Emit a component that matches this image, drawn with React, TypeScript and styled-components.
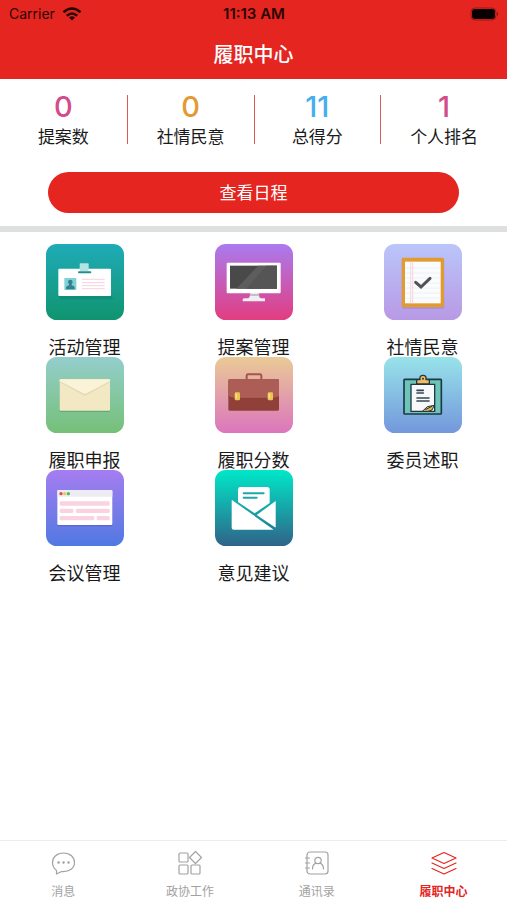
import React from "react";
import styled, { createGlobalStyle } from "styled-components";

const RED = "#e5251f";

const GlobalStyle = createGlobalStyle`
  *, *::before, *::after { box-sizing: border-box; }
  body {
    margin: 0;
    background: #fff;
    color: #1a1a1a;
    font-family: Inter, "Noto Sans CJK SC", sans-serif;
  }
  button { font: inherit; color: inherit; border: 0; padding: 0; background: none; cursor: pointer; }
`;

const Page = styled.div`
  min-height: 100vh;
  display: flex;
  flex-direction: column;
`;

const Header = styled.header`
  background: ${RED};
  padding-bottom: 9px;
`;

const StatusBar = styled.div`
  display: grid;
  grid-template-columns: 1fr auto 1fr;
  align-items: center;
  height: 28px;
  padding: 0 8px 0 9px;
  color: #2a0504;
  font-size: 14px;
  line-height: 20px;
`;

const Carrier = styled.div`
  display: flex;
  align-items: center;
  gap: 7px;
`;

const Time = styled.time`
  font-size: 15px;
  font-weight: 600;
`;

const Battery = styled.svg`
  justify-self: end;
`;

const Title = styled.h1`
  margin: 0;
  padding-top: 12px;
  color: #fff;
  font-size: 20px;
  line-height: 30px;
  font-weight: 500;
  text-align: center;
`;

const Stats = styled.dl`
  display: grid;
  grid-template-columns: repeat(4, 1fr);
  margin: 0;
  padding: 16px 0 28px;
`;

const Stat = styled.div`
  display: flex;
  flex-direction: column-reverse;
  justify-content: space-between;
  align-items: center;
  height: 49px;
  & + & { border-left: 1px solid #dc5a58; }
`;

const StatLabel = styled.dt`
  font-size: 17px;
  line-height: 14px;
`;

const StatValue = styled.dd<{ $color: string }>`
  margin: 0;
  color: ${(p) => p.$color};
  font-size: 29px;
  line-height: 24px;
  font-weight: 500;
`;

const ScheduleButton = styled.button`
  && {
    margin: 0 48px 13px;
    height: 41px;
    border-radius: 21px;
    background: ${RED};
    color: #fff;
    font-size: 17px;
    line-height: 24px;
  }
`;

const Separator = styled.hr`
  width: 100%;
  height: 6px;
  margin: 0;
  border: 0;
  background: #dedfdf;
`;

const Main = styled.main`
  flex: 1;
  padding-top: 12px;
`;

const MenuGrid = styled.div`
  display: grid;
  grid-template-columns: repeat(3, 1fr);
`;

const MenuItem = styled.button`
  display: flex;
  flex-direction: column;
  align-items: center;
  gap: 18px;
`;

const MenuIcon = styled.svg`
  display: block;
  width: 78px;
  height: 76px;
`;

const MenuLabel = styled.span`
  font-size: 18px;
  line-height: 19px;
`;

const TabBar = styled.nav`
  display: grid;
  grid-template-columns: repeat(4, 1fr);
  height: 60px;
  border-top: 1px solid #ececec;
`;

const Tab = styled.button<{ $active?: boolean }>`
  && {
    display: flex;
    flex-direction: column;
    align-items: center;
    gap: 7px;
    padding-top: 9px;
    color: ${(p) => (p.$active ? RED : "#a2a2a2")};
    font-size: 12px;
    line-height: 18px;
    font-weight: ${(p) => (p.$active ? 700 : 400)};
  }
`;

const TabIcon = styled.svg`
  width: 26px;
  height: 26px;
  fill: none;
  stroke: currentColor;
  stroke-width: 1.2;
  stroke-linejoin: round;
  stroke-linecap: round;
`;

const BadgeArt = () => (
  <>
    <path d="M37 156h158l8 10H45z" fill="#08725c" opacity=".3" />
    <rect x="37" y="74" width="158" height="82" rx="3" fill="#fff" />
    <rect x="101" y="58" width="27" height="23" rx="2" fill="#b5e2e4" />
    <rect x="96" y="82" width="40" height="6" rx="3" fill="#218f8d" />
    <rect x="55" y="102" width="36" height="36" fill="#7fd3d8" />
    <circle cx="73" cy="114" r="7" fill="#35818c" />
    <path d="M60 136v-6q2-5 9-6v-5h8v5q8 1 9 6v6z" fill="#35818c" />
    <path d="M108 106h68M108 116h68M108 125h68M108 134h68" stroke="#fbd9e4" strokeWidth="4" />
  </>
);

const MonitorArt = () => (
  <>
    <path d="M106 146h25q0 15 7 17h12v9H83v-6q0-3 6-3h8q9-1 9-17z" fill="#f0edf3" />
    <path d="M105 149h27l1 7h-29z" fill="#c9bccb" />
    <rect x="35" y="56" width="162" height="92" rx="3" fill="#fff" />
    <rect x="45" y="65" width="141" height="69" fill="#494949" />
    <path d="M130 65h56v69H64z" fill="#5d5d5d" />
    <path d="M154 65h32v69H94z" fill="#555" />
  </>
);

const NotebookArt = () => (
  <>
    <rect x="54" y="46" width="127" height="149" rx="5" fill="#8f79bd" opacity=".35" />
    <rect x="53" y="41" width="127" height="149" rx="4" fill="#e29b31" />
    <rect x="63" y="53" width="107" height="125" fill="#fbfcfd" />
    <path d="M63 72h107M63 87h107M63 102h107M63 117h107M63 132h107M63 147h107M63 162h107" stroke="#e2ebf1" strokeWidth="2" />
    <path d="M80 53v125M86 53v125" stroke="#f8d4da" strokeWidth="3" />
    <path d="M95 115l16 14 27-26" fill="none" stroke="#505257" strokeWidth="9" strokeLinecap="round" />
  </>
);

const EnvelopeArt = () => (
  <>
    <rect x="41" y="70" width="151" height="95" rx="4" fill="#4f9a66" opacity=".6" />
    <rect x="41" y="67" width="151" height="94" rx="3" fill="#f3e8c4" />
    <path d="M41 70q0-3 4-3h143q4 0 4 3v5l-69 38q-6 3-12 0L41 75z" fill="#e2d7ae" />
    <path d="M41 69q0-2 4-2h143q4 0 4 2v3l-69 37q-6 3-12 0L41 72z" fill="#fbf3d8" />
  </>
);

const BriefcaseArt = () => (
  <>
    <path d="M95 68V56q0-4 4-4h36q4 0 4 4v12" fill="none" stroke="#a4554e" strokeWidth="6" />
    <rect x="40" y="67" width="152" height="94" rx="4" fill="#914039" />
    <path d="M40 71q0-4 4-4h144q4 0 4 4v47q-8 6-22 6H62q-14 0-22-6z" fill="#ac5d56" />
    <path d="M40 119q8 5 22 5h108q14 0 22-5" fill="none" stroke="#85372f" strokeWidth="2" />
    <rect x="59" y="106" width="16" height="24" rx="4" fill="#edc354" />
    <rect x="158" y="106" width="16" height="24" rx="4" fill="#edc354" />
    <path d="M64 110v14M163 110v14" stroke="#f8e394" strokeWidth="4" />
  </>
);

const ClipboardArt = () => (
  <>
    <rect x="60" y="67" width="112" height="104" rx="2" fill="#6bc6b9" stroke="#203744" strokeWidth="5" />
    <path d="M81 82h71v81H81z" fill="#f7f8fa" stroke="#203744" strokeWidth="4" />
    <path d="M98 81V68h10q-2-13 9-13t9 13h10v13z" fill="#f2bd60" stroke="#203744" strokeWidth="4" strokeLinejoin="round" />
    <circle cx="117" cy="65" r="3" fill="#203744" />
    <path d="M99 100h19M99 108h19M99 123h36M99 132h36" stroke="#344653" strokeWidth="5" strokeLinecap="round" />
    <path d="M115 163l15-14 21-4-7 14-12 4z" fill="#e5b653" stroke="#203744" strokeWidth="3" strokeLinejoin="round" />
    <path d="M124 158l20-10" stroke="#203744" strokeWidth="3" />
  </>
);

const BrowserArt = () => (
  <>
    <rect x="34" y="64" width="165" height="105" rx="3" fill="#3d4eb2" opacity=".4" />
    <rect x="34" y="60" width="165" height="105" rx="3" fill="#fff" />
    <path d="M34 63q0-3 3-3h159q3 0 3 3v17H34z" fill="#ececf2" />
    <circle cx="45" cy="71" r="5" fill="#e34b50" />
    <circle cx="56" cy="71" r="5" fill="#f2c65a" />
    <circle cx="67" cy="71" r="5" fill="#50b86b" />
    <g fill="#f9d3e0">
      <rect x="41" y="94" width="150" height="13" rx="4" />
      <rect x="41" y="116" width="41" height="13" rx="4" />
      <rect x="90" y="116" width="101" height="13" rx="4" />
      <rect x="41" y="138" width="104" height="13" rx="4" />
      <rect x="152" y="138" width="39" height="13" rx="4" />
    </g>
  </>
);

const LetterArt = () => (
  <>
    <path d="M75 51h81q8 0 8 8v40l-45 31-50-34V59q0-8 6-8z" fill="#fff" />
    <path d="M86 70h60M86 83h39" stroke="#20a6a6" strokeWidth="6" strokeLinecap="round" />
    <path d="M51 90l125 89H56q-6 0-6-6V92z" fill="#fff" />
    <path d="M182 93v78q0 2-2 1l-55-37z" fill="#fff" />
  </>
);

type Entry = { label: string; from: string; to: string; Art: () => React.ReactElement };

const entries: Entry[] = [
  { label: "活动管理", from: "#1fabb8", to: "#10946f", Art: BadgeArt },
  { label: "提案管理", from: "#aa7bef", to: "#e23d80", Art: MonitorArt },
  { label: "社情民意", from: "#bac6fa", to: "#b899e5", Art: NotebookArt },
  { label: "履职申报", from: "#94cecd", to: "#75c078", Art: EnvelopeArt },
  { label: "履职分数", from: "#eaca96", to: "#db76bd", Art: BriefcaseArt },
  { label: "委员述职", from: "#98e3ea", to: "#7397dc", Art: ClipboardArt },
  { label: "会议管理", from: "#a67df0", to: "#5079e2", Art: BrowserArt },
  { label: "意见建议", from: "#00e8c8", to: "#2f6388", Art: LetterArt },
];

const stats = [
  { label: "提案数", value: 0, color: "#d24c8b" },
  { label: "社情民意", value: 0, color: "#e39a34" },
  { label: "总得分", value: 11, color: "#45aeed" },
  { label: "个人排名", value: 1, color: "#d24c8b" },
];

const tabs = [
  {
    label: "消息",
    icon: (
      <>
        <path d="M6.500 20.500v3.500l5-2.500C20 22 24.500 18 24.500 12.500S20 3 13.500 3 2.500 7 2.500 12.500c0 3.500 1.500 6 4 8z" />
        <path d="M8.500 12.500h.1M13.500 12.500h.1M18.500 12.500h.1" strokeWidth="2.400" />
      </>
    ),
  },
  {
    label: "政协工作",
    icon: (
      <>
        <rect x="2" y="3" width="9" height="9" rx="1" />
        <rect x="2" y="15" width="9" height="9" rx="1" />
        <rect x="14" y="15" width="9" height="9" rx="1" />
        <path d="M18.500 1.500l6 6-6 6-6-6z" />
      </>
    ),
  },
  {
    label: "通讯录",
    icon: (
      <>
        <rect x="3" y="2" width="21" height="22" rx="3" />
        <path d="M1.500 8h4M1.500 13h4M1.500 18h4" />
        <circle cx="14" cy="10.500" r="3.200" />
        <path d="M8.500 19q0-5 4-5.800M15.500 13.200q4 .8 4 5.800" />
      </>
    ),
  },
  {
    label: "履职中心",
    icon: (
      <>
        <path d="M13 2.500l12 5.500-12 5.500L1 8z" />
        <path d="M1 13l12 5.500L25 13M1 18.500L13 24l12-5.500" />
      </>
    ),
  },
];

export default function App() {
  return (
    <Page>
      <GlobalStyle />
      <Header>
        <StatusBar>
          <Carrier>
            Carrier
            <svg width="20" height="14" viewBox="0 0 20 14" fill="none" stroke="currentColor" strokeWidth="2.600" aria-label="Wi-Fi">
              <path d="M1.500 5.200Q10-2.200 18.500 5.200M4.800 8.700q5.200-4.400 10.400 0" />
              <path d="M10 13.500L7 10.600q3-2.600 6 0z" fill="currentColor" stroke="none" />
            </svg>
          </Carrier>
          <Time>11:13 AM</Time>
          <Battery width="29" height="14" viewBox="0 0 29 14" aria-label="电量">
            <rect x="1" y="1" width="25" height="12" rx="4" fill="none" stroke="#9b1915" />
            <rect x="2" y="2" width="23" height="10" rx="3" fill="#090101" />
            <path d="M27 5q2 2 0 4z" fill="#6e110e" />
          </Battery>
        </StatusBar>
        <Title>履职中心</Title>
      </Header>
      <Stats>
        {stats.map((s) => (
          <Stat key={s.label}>
            <StatLabel>{s.label}</StatLabel>
            <StatValue $color={s.color}>{s.value}</StatValue>
          </Stat>
        ))}
      </Stats>
      <ScheduleButton type="button">查看日程</ScheduleButton>
      <Separator />
      <Main>
        <MenuGrid>
          {entries.map(({ label, from, to, Art }, i) => (
            <MenuItem key={label} type="button">
              <MenuIcon viewBox="0 0 234 228" aria-hidden="true">
                <defs>
                  <linearGradient id={`tile-${i}`} x1="0" y1="0" x2="0" y2="1">
                    <stop offset="0" stopColor={from} />
                    <stop offset="1" stopColor={to} />
                  </linearGradient>
                </defs>
                <rect width="234" height="228" rx="32" fill={`url(#tile-${i})`} />
                <Art />
              </MenuIcon>
              <MenuLabel>{label}</MenuLabel>
            </MenuItem>
          ))}
        </MenuGrid>
      </Main>
      <TabBar>
        {tabs.map((t, i) => (
          <Tab key={t.label} type="button" $active={i === 3} aria-current={i === 3 ? "page" : undefined}>
            <TabIcon viewBox="0 0 26 26" aria-hidden="true">{t.icon}</TabIcon>
            {t.label}
          </Tab>
        ))}
      </TabBar>
    </Page>
  );
}
